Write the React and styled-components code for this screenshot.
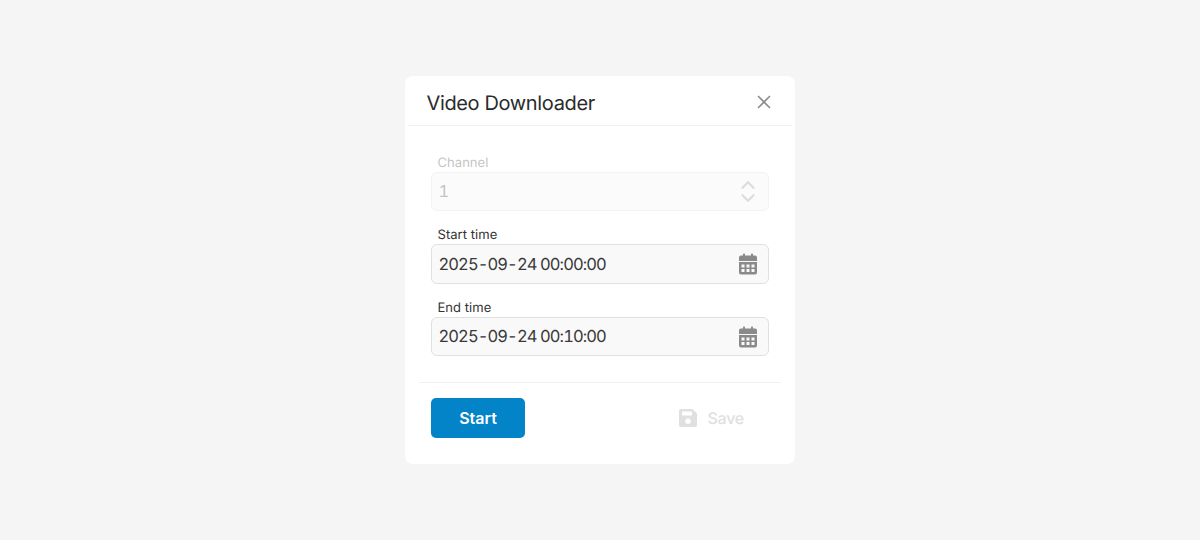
import React from 'react';
import styled, { createGlobalStyle } from 'styled-components';
import { X, ChevronUp, ChevronDown } from 'lucide-react';

const GlobalStyle = createGlobalStyle`
  html, body { margin: 0; padding: 0; }
  body {
    background: #f5f5f5;
    font-family: 'Inter', 'Liberation Sans', sans-serif;
    text-rendering: geometricPrecision;
  }
`;

const Page = styled.div`
  width: 1200px;
  height: 540px;
  display: flex;
  align-items: center;
  justify-content: center;
`;

const Dialog = styled.div`
  width: 390px;
  height: 388px;
  box-sizing: border-box;
  background: #fff;
  border-radius: 8px;
  padding: 0 3px;
  display: flex;
  flex-direction: column;
`;

const Header = styled.div`
  height: 50px;
  box-sizing: border-box;
  flex: none;
  border-bottom: 1px solid #f0f0f0;
  display: flex;
  align-items: center;
  justify-content: space-between;
  padding: 5px 17px 0 18.5px;
`;

const Title = styled.div`
  font-size: 20px;
  font-weight: 400;
  letter-spacing: -0.36px;
  color: #2b2b2b;
`;

const CloseButton = styled.div`
  display: flex;
  padding-bottom: 2px;
  color: #8c8c8c;
`;

const Form = styled.div`
  padding: 27px 23px 0;
  display: flex;
  flex-direction: column;
`;

const Field = styled.div`
  margin-bottom: 14px;
`;

const Label = styled.div`
  font-size: 13px;
  line-height: 20px;
  height: 19px;
  padding-left: 6.5px;
  letter-spacing: 0.05px;
  color: ${(p) => (p.$disabled ? '#c4c4c4' : '#333')};
`;

const InputBox = styled.div`
  height: ${(p) => p.$height}px;
  box-sizing: border-box;
  border: 1px solid ${(p) => (p.$disabled ? '#f3f3f3' : '#e0e0e0')};
  border-radius: 6px;
  background: ${(p) => (p.$disabled ? '#fbfbfb' : '#f9f9f9')};
  display: flex;
  align-items: center;
  justify-content: space-between;
  padding: 0 11px 0 6.5px;
  font-size: 16.5px;
  line-height: 19px;
  letter-spacing: -0.9px;
  font-variant-numeric: tabular-nums;
  color: ${(p) => (p.$disabled ? '#c4c4c4' : '#3a3a3a')};
`;

const Stepper = styled.div`
  display: flex;
  flex-direction: column;
  align-items: center;
  color: #dcdcdc;
  margin-right: -2px;

  svg { display: block; margin: -4.75px 0; }
`;

const Footer = styled.div`
  margin: 12px 11px 0;
  border-top: 1px solid #f0f0f0;
  padding: 15px 12px 0;
  display: flex;
  align-items: center;
  justify-content: space-between;
`;

const StartButton = styled.button`
  width: 94px;
  height: 40px;
  padding: 0 0 1px;
  border: 0;
  border-radius: 5px;
  background: #0384c8;
  color: #fff;
  font-family: inherit;
  font-size: 16px;
  font-weight: 600;
`;

const SaveButton = styled.div`
  display: flex;
  align-items: center;
  gap: 11px;
  padding-right: 25px;
  font-size: 16px;
  font-weight: 500;
  letter-spacing: -0.25px;
  color: #e0e0e0;
`;

const CalendarIcon = () => (
  <svg width="18" height="22" viewBox="0 0 18 22" fill="#8a8a8a">
    <rect x="4" y="0.5" width="2" height="4" rx="0.8" />
    <rect x="12" y="0.5" width="2" height="4" rx="0.8" />
    <path d="M2 2.500h14a2 2 0 0 1 2 2V8H0V4.500a2 2 0 0 1 2-2z" />
    <path fillRule="evenodd" d="M0 9h18v10.500a2 2 0 0 1-2 2H2a2 2 0 0 1-2-2zM2.500 11.500v3h3v-3zM7.500 11.500v3h3v-3zM12.500 11.500v3h3v-3zM2.500 16v3h3v-3zM7.500 16v3h3v-3zM12.500 16v3h3v-3z" />
  </svg>
);

const SaveIcon = () => (
  <svg width="18" height="18" viewBox="0 0 18 18" fill="#e0e0e0">
    <path fillRule="evenodd" d="M2 0h11.500L18 4.500V16a2 2 0 0 1-2 2H2a2 2 0 0 1-2-2V2a2 2 0 0 1 2-2zM3 2.500v4h10v-4zM9 9.500a2.750 2.750 0 1 0 0 5.500 2.750 2.750 0 0 0 0-5.500z" />
  </svg>
);

const App = () => (
  <Page>
    <GlobalStyle />
    <Dialog>
      <Header>
        <Title>Video Downloader</Title>
        <CloseButton><X size={22} strokeWidth={1.8} /></CloseButton>
      </Header>
      <Form>
        <Field>
          <Label $disabled>Channel</Label>
          <InputBox $disabled $height={39}>
            1
            <Stepper>
              <ChevronUp size={22} strokeWidth={2.4} />
              <ChevronDown size={22} strokeWidth={2.4} />
            </Stepper>
          </InputBox>
        </Field>
        <Field>
          <Label>Start time</Label>
          <InputBox $height={40}>
            2025-09-24 00:00:00
            <CalendarIcon />
          </InputBox>
        </Field>
        <Field>
          <Label>End time</Label>
          <InputBox $height={39}>
            2025-09-24 00:10:00
            <CalendarIcon />
          </InputBox>
        </Field>
      </Form>
      <Footer>
        <StartButton>Start</StartButton>
        <SaveButton><SaveIcon />Save</SaveButton>
      </Footer>
    </Dialog>
  </Page>
);

export default App;
